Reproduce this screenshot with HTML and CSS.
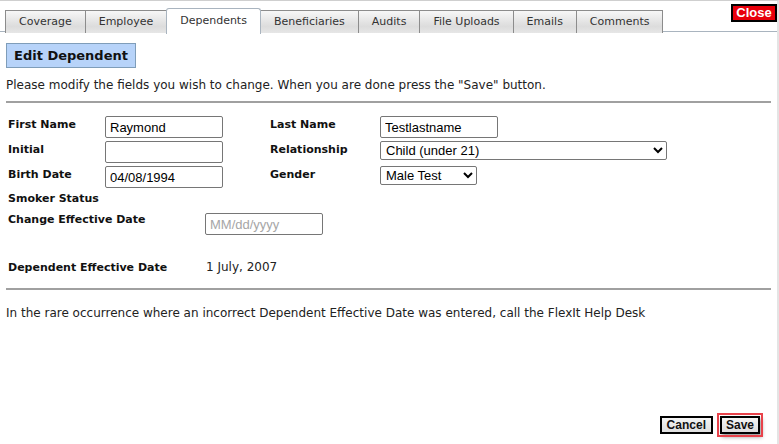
FILE: index.html
```html
<!DOCTYPE html>
<html>
<head>
<meta charset="utf-8">
<link rel="stylesheet" href="styles.css">
</head>
<body>
<div class="frame">
  <div class="topbar">
    <ul class="tabs">
      <li class="tab">Coverage</li>
      <li class="tab">Employee</li>
      <li class="tab active">Dependents</li>
      <li class="tab">Beneficiaries</li>
      <li class="tab">Audits</li>
      <li class="tab">File Uploads</li>
      <li class="tab">Emails</li>
      <li class="tab">Comments</li>
    </ul>
    <button class="close">Close</button>
  </div>
  <div class="content">
    <div class="title">Edit Dependent</div>
    <p class="intro">Please modify the fields you wish to change. When you are done press the "Save" button.</p>
    <div class="form">
      <div class="label">First Name</div>
      <div class="field"><input class="txt" type="text" value="Raymond"></div>
      <div class="label">Last Name</div>
      <div class="field"><input class="txt" type="text" value="Testlastname"></div>

      <div class="label">Initial</div>
      <div class="field"><input class="txt" type="text" value=""></div>
      <div class="label">Relationship</div>
      <div class="field"><select class="sel wide"><option>Child (under 21)</option></select></div>

      <div class="label">Birth Date</div>
      <div class="field"><input class="txt" type="text" value="04/08/1994"></div>
      <div class="label">Gender</div>
      <div class="field"><select class="sel narrow"><option>Male Test</option></select></div>
    </div>
    <div class="form2">
      <div class="label">Smoker Status</div>
      <div></div>
      <div class="label change">Change Effective Date</div>
      <div class="field"><input class="txt" type="text" placeholder="MM/dd/yyyy"></div>
      <div class="label gap">Dependent Effective Date</div>
      <div class="value gap">1 July, 2007</div>
    </div>
    <p class="note">In the rare occurrence where an incorrect Dependent Effective Date was entered, call the FlexIt Help Desk</p>
    <div class="actions">
      <button class="btn">Cancel</button>
      <button class="btn save">Save</button>
    </div>
  </div>
</div>
</body>
</html>
```

FILE: styles.css
```css
html, body {
  margin: 0;
  padding: 0;
  background: #fff;
}
body {
  font-family: "DejaVu Sans", Verdana, sans-serif;
  font-size: 12px;
  color: #222;
}
.frame {
  width: 779px;
  height: 444px;
  border-top: 1px solid #cfcfcf;
  border-right: 2px solid #e4e4e4;
  box-sizing: border-box;
  position: relative;
  overflow: hidden;
}
.topbar {
  display: flex;
  align-items: flex-start;
  justify-content: space-between;
  border-bottom: 1px solid #a9b4bf;
  height: 30px;
}
.tabs {
  list-style: none;
  margin: 0;
  padding: 7px 0 0 5px;
  display: flex;
  align-items: flex-end;
}
.tab {
  height: 22px;
  line-height: 22px;
  padding: 0 13px;
  border: 1px solid #8c8c8c;
  border-bottom: none;
  margin-right: -1px;
  background: linear-gradient(#f7f7f7, #dcdcdc 70%, #e6e6e6);
  color: #333;
  font-size: 11px;
  white-space: nowrap;
}
.tab.active {
  height: 25px;
  line-height: 24px;
  background: #fff;
  border-color: #a9b4bf;
  border-radius: 3px 3px 0 0;
  margin-bottom: -1px;
  position: relative;
  z-index: 1;
}
.close {
  margin: 3px 0 0 0;
  height: 18px;
  width: 46px;
  padding: 0;
  background: #e8000b;
  border: 2px solid #000;
  color: #fff;
  font-family: "Liberation Sans", Arial, sans-serif;
  font-weight: bold;
  font-size: 13px;
  line-height: 14px;
}
.content {
  padding: 0 6px;
}
.title {
  display: inline-block;
  margin-top: 11px;
  height: 23px;
  line-height: 23px;
  padding: 0 7px;
  background: #b7d3f9;
  border: 1px solid #7f9db9;
  font-weight: bold;
  font-size: 13px;
  color: #111;
}
.intro {
  margin: 9px 0 0 0;
  line-height: 16px;
  padding-bottom: 8px;
  border-bottom: 2px solid #a0a0a0;
}
.form {
  display: grid;
  grid-template-columns: 97px 165px 110px 1fr;
  grid-auto-rows: 25px;
  margin-top: 13px;
  padding-left: 2px;
}
.form2 {
  display: grid;
  grid-template-columns: 197px 1fr;
  grid-template-rows: 21px 37px 24px;
  padding-left: 2px;
  margin-top: 1px;
}
.label {
  font-weight: bold;
  font-size: 11px;
  color: #111;
  padding-top: 2px;
}
.form2 .label, .form2 .value { padding-top: 0; }
.value {
  font-size: 12px;
  padding-left: 1px;
}
.gap { align-self: end; }
.txt {
  box-sizing: border-box;
  width: 118px;
  height: 22px;
  border: 1px solid #767676;
  border-radius: 2px;
  padding: 1px 4px;
  font-family: "Liberation Sans", Arial, sans-serif;
  font-size: 13px;
  color: #000;
  margin: 0;
}
.txt::placeholder { color: #a6a6a6; }
.sel {
  box-sizing: border-box;
  height: 19px;
  border: 1px solid #767676;
  border-radius: 2px;
  font-family: "Liberation Sans", Arial, sans-serif;
  font-size: 13px;
  color: #000;
  background: #fff;
  padding: 0 1px;
  margin: 0;
}
.sel.wide { width: 287px; }
.sel.narrow { width: 97px; }
.note {
  margin: 14px 0 0 0;
  padding-top: 15px;
  border-top: 2px solid #a0a0a0;
  line-height: 16px;
}
.actions {
  position: absolute;
  right: 17px;
  bottom: 10px;
  display: flex;
  align-items: center;
  gap: 7px;
}
.btn {
  height: 18px;
  padding: 0 5px;
  background: linear-gradient(#f4f4f4, #dedede);
  border: 2px solid #000;
  font-family: "Liberation Sans", Arial, sans-serif;
  font-weight: bold;
  font-size: 12px;
  line-height: 14px;
  color: #111;
}
.btn.save {
  padding: 0 4px;
  outline: 2px solid #e8424a;
  outline-offset: 1px;
  box-shadow: 2px 3px 4px rgba(0,0,0,0.4);
}
```
